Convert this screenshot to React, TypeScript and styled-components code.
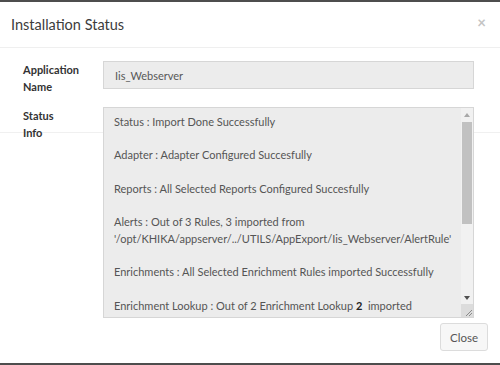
import React from "react";
import styled, { createGlobalStyle } from "styled-components";

const GlobalStyle = createGlobalStyle`
  html, body {
    margin: 0;
    padding: 0;
    background: #ffffff;
  }
  body {
    font-family: Lato, "Liberation Sans", sans-serif;
  }
`;

const Frame = styled.div`
  width: 500px;
  height: 365px;
  box-sizing: border-box;
  display: flex;
  flex-direction: column;
  background: #ffffff;
  border-top: 2px solid #4d4d4d;
  border-bottom: 2px solid #4d4d4d;
`;

const Header = styled.div`
  height: 45px;
  display: flex;
  align-items: center;
  justify-content: space-between;
  padding: 0 14px 0 11px;
  border-bottom: 1px solid #efefef;
`;

const ModalTitle = styled.h4`
  margin: 0;
  font-size: 14.5px;
  font-weight: 400;
  color: #3c3c3c;
`;

const CloseX = styled.span`
  font-size: 15px;
  font-weight: 700;
  color: #c4c4c4;
  line-height: 1;
  margin-top: -4px;
`;

const Body = styled.div`
  padding: 13px 26px 0 23px;
  display: flex;
  flex-direction: column;
  gap: 12px;
`;

const FormRow = styled.div<{ $divider?: boolean }>`
  display: grid;
  grid-template-columns: 80px 1fr;
  align-items: start;
  margin-left: ${(p) => (p.$divider ? "-23px" : "0")};
  padding-left: ${(p) => (p.$divider ? "23px" : "0")};
  margin-right: ${(p) => (p.$divider ? "-26px" : "0")};
  padding-right: ${(p) => (p.$divider ? "26px" : "0")};
  background: ${(p) =>
    p.$divider
      ? "linear-gradient(to bottom, transparent 25px, #f0f0f0 25px, #f0f0f0 26px, transparent 26px)"
      : "none"};
`;

const Label = styled.label`
  font-size: 11px;
  font-weight: 700;
  line-height: 16.5px;
  color: #333333;
  padding-top: 1px;
`;

const ReadOnlyInput = styled.div`
  height: 28px;
  box-sizing: border-box;
  border: 1px solid #d6d6d6;
  background: #ececec;
  color: #585858;
  font-size: 11px;
  padding: 0 11px;
  display: flex;
  align-items: center;
`;

const TextBox = styled.div`
  height: 211px;
  box-sizing: border-box;
  border: 1px solid #d6d6d6;
  background: #ececec;
  display: flex;
`;

const TextContent = styled.div`
  flex: 1;
  overflow: hidden;
  padding: 6px 10px 0 10px;
  font-size: 11px;
  line-height: 16.7px;
  color: #555555;
`;

const Para = styled.p`
  margin: 0 0 16.7px 0;
  white-space: pre-wrap;
`;

const Strong = styled.span`
  color: #222222;
  font-weight: 700;
`;

const ScrollBar = styled.div`
  width: 12px;
  display: flex;
  flex-direction: column;
  background: #f1f1f1;
`;

const ArrowButton = styled.div`
  height: 13px;
  display: flex;
  align-items: center;
  justify-content: center;
`;

const Track = styled.div`
  flex: 1;
  display: flex;
  flex-direction: column;
  padding: 1px 1px 0 1px;
`;

const Thumb = styled.div`
  height: 102px;
  background: #c1c1c1;
`;

const Grip = styled.div`
  height: 13px;
  background: #dcdcdc;
  display: flex;
  align-items: flex-end;
  justify-content: flex-end;
`;

const Footer = styled.div`
  display: flex;
  justify-content: flex-end;
  padding: 5px 12px 0 0;
`;

const Button = styled.button`
  height: 28px;
  width: 48px;
  box-sizing: border-box;
  border: 1px solid #dcdcdc;
  border-radius: 3px;
  background: #f7f7f7;
  color: #555555;
  font-family: Lato, "Liberation Sans", sans-serif;
  font-size: 11.5px;
  padding: 0;
`;

const lines: React.ReactNode[] = [
  "Status : Import Done Successfully",
  "Adapter : Adapter Configured Succesfully",
  "Reports : All Selected Reports Configured Succesfully",
  "Alerts : Out of 3 Rules, 3 imported from '/opt/KHIKA/appserver/../UTILS/AppExport/Iis_Webserver/AlertRule'",
  "Enrichments : All Selected Enrichment Rules imported Successfully",
  <>
    Enrichment Lookup : Out of 2 Enrichment Lookup <Strong>2</Strong>
    {"  imported successfully"}
  </>,
];

export default function App() {
  return (
    <>
      <GlobalStyle />
      <Frame>
        <Header>
          <ModalTitle>Installation Status</ModalTitle>
          <CloseX>×</CloseX>
        </Header>
        <Body>
          <FormRow>
            <Label>
              Application
              <br />
              Name
            </Label>
            <ReadOnlyInput>Iis_Webserver</ReadOnlyInput>
          </FormRow>
          <FormRow $divider>
            <Label>
              Status
              <br />
              Info
            </Label>
            <TextBox>
              <TextContent>
                {lines.map((line, i) => (
                  <Para key={i}>{line}</Para>
                ))}
              </TextContent>
              <ScrollBar>
                <ArrowButton>
                  <svg width="6" height="4" viewBox="0 0 6 4">
                    <polygon points="3,0 6,4 0,4" fill="#a8a8a8" />
                  </svg>
                </ArrowButton>
                <Track>
                  <Thumb />
                </Track>
                <ArrowButton>
                  <svg width="6" height="4" viewBox="0 0 6 4">
                    <polygon points="0,0 6,0 3,4" fill="#505050" />
                  </svg>
                </ArrowButton>
                <Grip>
                  <svg width="10" height="10" viewBox="0 0 10 10">
                    <line x1="9" y1="3" x2="3" y2="9" stroke="#8a8a8a" strokeWidth="1" />
                    <line x1="9" y1="6" x2="6" y2="9" stroke="#8a8a8a" strokeWidth="1" />
                  </svg>
                </Grip>
              </ScrollBar>
            </TextBox>
          </FormRow>
        </Body>
        <Footer>
          <Button>Close</Button>
        </Footer>
      </Frame>
    </>
  );
}
